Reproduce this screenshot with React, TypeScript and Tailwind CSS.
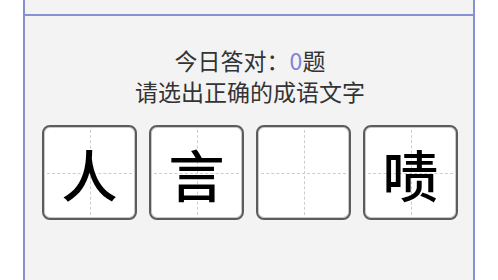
const chars = ['人', '言', '', '啧'];

const CharBox = ({ ch }: { ch: string }) => {
  return (
    <div className="relative w-[95px] h-[95px] rounded-[8px] border-2 border-[#5c5c5c] bg-white shadow-[inset_0_0_0_1px_#c9c9c9] flex items-center justify-center">
      <div className="absolute left-1/2 top-[3px] bottom-[3px] border-l border-dashed border-[#cdcdcd]"></div>
      <div className="absolute top-1/2 left-[3px] right-[3px] border-t border-dashed border-[#cdcdcd]"></div>
      <span className="relative text-[56px] leading-none font-medium text-black">{ch}</span>
    </div>
  );
};

const App = () => {
  return (
    <div
      className="w-[498px] h-[280px] bg-white px-[23px] overflow-hidden"
      style={{ fontFamily: '"Noto Sans CJK SC", "Noto Sans", sans-serif' }}
    >
      <div className="h-full border-x-2 border-[#8790d4] bg-[#f3f3f3] flex flex-col">
        <div className="h-[16px] shrink-0 border-b-2 border-[#8790d4]"></div>

        <div className="flex-1 pt-[29px] pl-[2px]">
          <p className="text-center text-[23px] leading-[31px] text-[#333]">
            今日答对：<span className="text-[#7d84da]">0</span>题
          </p>
          <p className="text-center text-[23px] leading-[31px] text-[#333]">请选出正确的成语文字</p>

          <div className="mt-[18px] flex justify-center gap-[12px]">
            {chars.map((ch, i) => (
              <CharBox key={i} ch={ch} />
            ))}
          </div>
        </div>
      </div>
    </div>
  );
};

export default App;
